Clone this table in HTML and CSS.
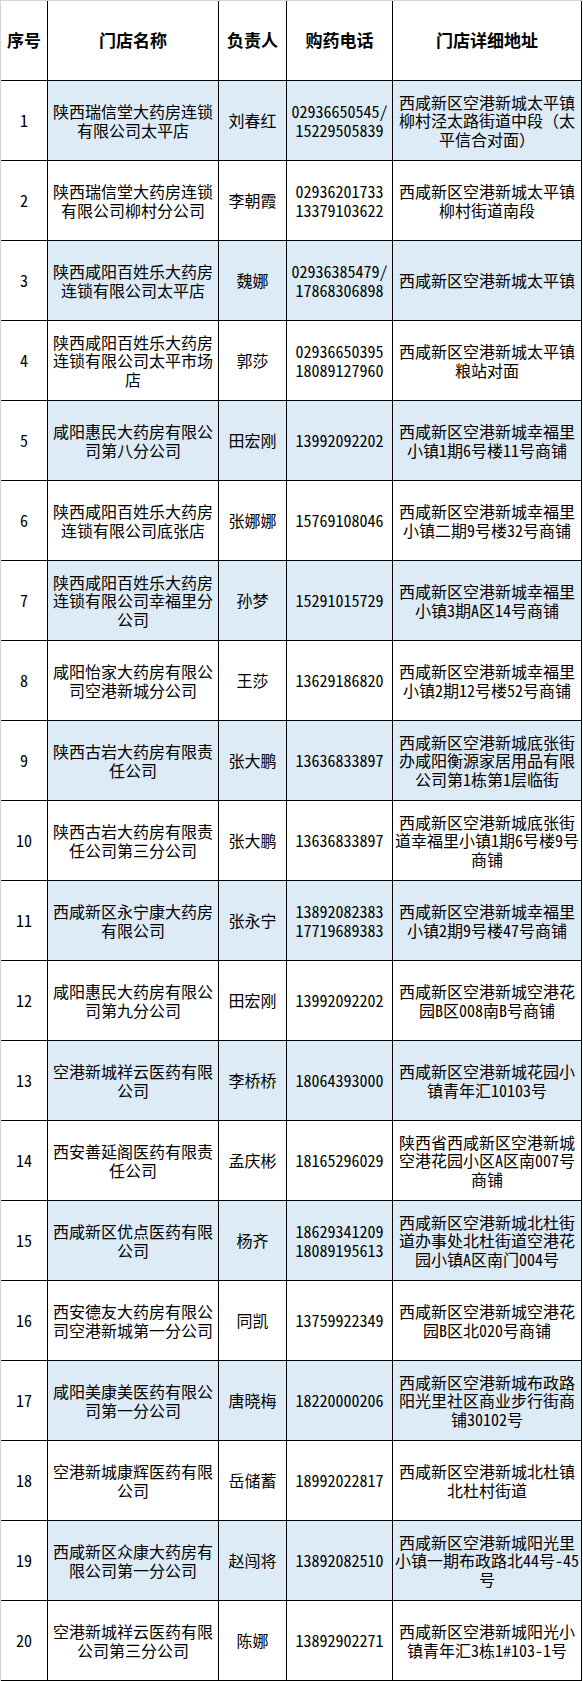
FILE: index.html
```html
<!DOCTYPE html>
<html lang="zh-CN">
<head>
<meta charset="utf-8">
<title>门店列表</title>
<link rel="stylesheet" href="styles.css">
</head>
<body>
<div class="sheet">
  <div class="row head">
    <div class="c">序号</div><div class="c">门店名称</div><div class="c">负责人</div><div class="c">购药电话</div><div class="c">门店详细地址</div>
  </div>
  <div class="row alt">
    <div class="c">1</div><div class="c">陕西瑞信堂大药房连锁<br>有限公司太平店</div><div class="c">刘春红</div><div class="c">02936650545/<br>15229505839</div><div class="c"><div class="t">西咸新区空港新城太平镇<br>柳村泾太路街道中段<span class="fw">（</span>太<br>平信合对面<span class="fw">）</span></div></div>
  </div>
  <div class="row">
    <div class="c">2</div><div class="c">陕西瑞信堂大药房连锁<br>有限公司柳村分公司</div><div class="c">李朝霞</div><div class="c">02936201733<br>13379103622</div><div class="c">西咸新区空港新城太平镇<br>柳村街道南段</div>
  </div>
  <div class="row alt">
    <div class="c">3</div><div class="c">陕西咸阳百姓乐大药房<br>连锁有限公司太平店</div><div class="c">魏娜</div><div class="c">02936385479/<br>17868306898</div><div class="c">西咸新区空港新城太平镇</div>
  </div>
  <div class="row">
    <div class="c">4</div><div class="c">陕西咸阳百姓乐大药房<br>连锁有限公司太平市场<br>店</div><div class="c">郭莎</div><div class="c">02936650395<br>18089127960</div><div class="c">西咸新区空港新城太平镇<br>粮站对面</div>
  </div>
  <div class="row alt">
    <div class="c">5</div><div class="c">咸阳惠民大药房有限公<br>司第八分公司</div><div class="c">田宏刚</div><div class="c">13992092202</div><div class="c">西咸新区空港新城幸福里<br>小镇1期6号楼11号商铺</div>
  </div>
  <div class="row">
    <div class="c">6</div><div class="c">陕西咸阳百姓乐大药房<br>连锁有限公司底张店</div><div class="c">张娜娜</div><div class="c">15769108046</div><div class="c">西咸新区空港新城幸福里<br>小镇二期9号楼32号商铺</div>
  </div>
  <div class="row alt">
    <div class="c">7</div><div class="c">陕西咸阳百姓乐大药房<br>连锁有限公司幸福里分<br>公司</div><div class="c">孙梦</div><div class="c">15291015729</div><div class="c">西咸新区空港新城幸福里<br>小镇3期A区14号商铺</div>
  </div>
  <div class="row">
    <div class="c">8</div><div class="c">咸阳怡家大药房有限公<br>司空港新城分公司</div><div class="c">王莎</div><div class="c">13629186820</div><div class="c">西咸新区空港新城幸福里<br>小镇2期12号楼52号商铺</div>
  </div>
  <div class="row alt">
    <div class="c">9</div><div class="c">陕西古岩大药房有限责<br>任公司</div><div class="c">张大鹏</div><div class="c">13636833897</div><div class="c">西咸新区空港新城底张街<br>办咸阳衡源家居用品有限<br>公司第1栋第1层临街</div>
  </div>
  <div class="row">
    <div class="c">10</div><div class="c">陕西古岩大药房有限责<br>任公司第三分公司</div><div class="c">张大鹏</div><div class="c">13636833897</div><div class="c">西咸新区空港新城底张街<br>道幸福里小镇1期6号楼9号<br>商铺</div>
  </div>
  <div class="row alt">
    <div class="c">11</div><div class="c">西咸新区永宁康大药房<br>有限公司</div><div class="c">张永宁</div><div class="c">13892082383<br>17719689383</div><div class="c">西咸新区空港新城幸福里<br>小镇2期9号楼47号商铺</div>
  </div>
  <div class="row">
    <div class="c">12</div><div class="c">咸阳惠民大药房有限公<br>司第九分公司</div><div class="c">田宏刚</div><div class="c">13992092202</div><div class="c">西咸新区空港新城空港花<br>园B区008南B号商铺</div>
  </div>
  <div class="row alt">
    <div class="c">13</div><div class="c">空港新城祥云医药有限<br>公司</div><div class="c">李桥桥</div><div class="c">18064393000</div><div class="c">西咸新区空港新城花园小<br>镇青年汇10103号</div>
  </div>
  <div class="row">
    <div class="c">14</div><div class="c">西安善延阁医药有限责<br>任公司</div><div class="c">孟庆彬</div><div class="c">18165296029</div><div class="c">陕西省西咸新区空港新城<br>空港花园小区A区南007号<br>商铺</div>
  </div>
  <div class="row alt">
    <div class="c">15</div><div class="c">西咸新区优点医药有限<br>公司</div><div class="c">杨齐</div><div class="c">18629341209<br>18089195613</div><div class="c">西咸新区空港新城北杜街<br>道办事处北杜街道空港花<br>园小镇A区南门004号</div>
  </div>
  <div class="row">
    <div class="c">16</div><div class="c">西安德友大药房有限公<br>司空港新城第一分公司</div><div class="c">同凯</div><div class="c">13759922349</div><div class="c">西咸新区空港新城空港花<br>园B区北020号商铺</div>
  </div>
  <div class="row alt">
    <div class="c">17</div><div class="c">咸阳美康美医药有限公<br>司第一分公司</div><div class="c">唐晓梅</div><div class="c">18220000206</div><div class="c">西咸新区空港新城布政路<br>阳光里社区商业步行街商<br>铺30102号</div>
  </div>
  <div class="row">
    <div class="c">18</div><div class="c">空港新城康辉医药有限<br>公司</div><div class="c">岳储蓄</div><div class="c">18992022817</div><div class="c">西咸新区空港新城北杜镇<br>北杜村街道</div>
  </div>
  <div class="row alt">
    <div class="c">19</div><div class="c">西咸新区众康大药房有<br>限公司第一分公司</div><div class="c">赵闯将</div><div class="c">13892082510</div><div class="c">西咸新区空港新城阳光里<br>小镇一期布政路北44号-45<br>号</div>
  </div>
  <div class="row">
    <div class="c">20</div><div class="c">空港新城祥云医药有限<br>公司第三分公司</div><div class="c">陈娜</div><div class="c">13892902271</div><div class="c">西咸新区空港新城阳光小<br>镇青年汇3栋1#103-1号</div>
  </div>
</div>
</body>
</html>
```

FILE: styles.css
```css
html, body {
  margin: 0;
  padding: 0;
  background: #fff;
}

body {
  font-family: "Noto Sans CJK SC", "Noto Sans", sans-serif;
  font-size: 16px;
  color: #000;
}

.sheet {
  width: fit-content;
  border-top: 1px solid #d4d4d4;
  border-left: 1px solid #d4d4d4;
}

.row {
  display: grid;
  grid-template-columns: 47px 171px 68px 106px 189px;
  height: 80px;
}

.c {
  box-sizing: border-box;
  border-right: 1px solid #000;
  border-bottom: 1px solid #000;
  display: flex;
  align-items: center;
  justify-content: center;
  text-align: center;
  white-space: nowrap;
  line-height: 18.5px;
  font-feature-settings: "hwid" 1;
}

.t {
  text-align: center;
}

.fw {
  font-feature-settings: normal;
}

.head .c {
  font-weight: bold;
  font-size: 17px;
}

.alt .c:not(:first-child) {
  background: #ddebf7;
}
```
